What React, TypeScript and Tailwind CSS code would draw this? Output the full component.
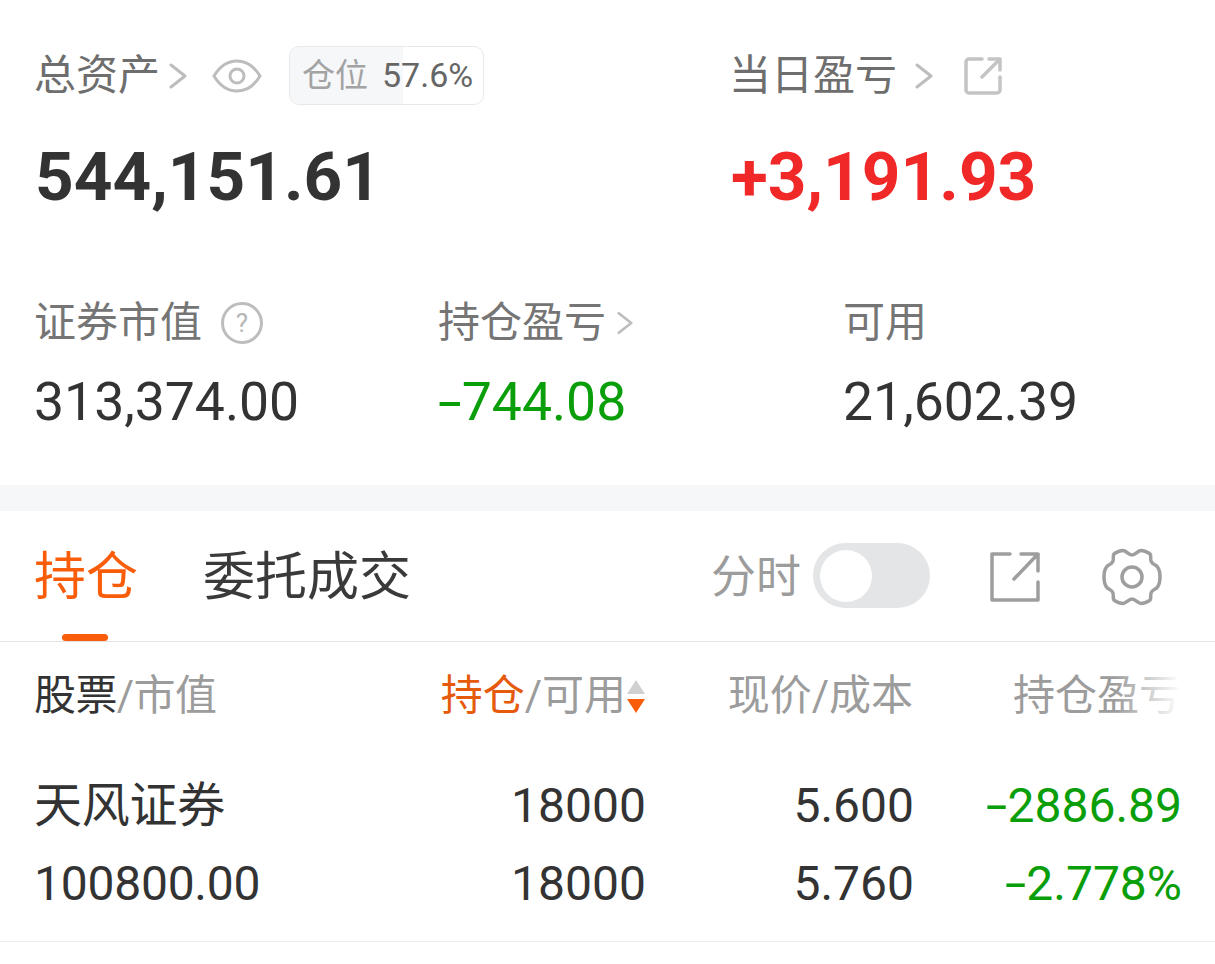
import React from "react";

const FONT = "font-['Roboto','Noto_Sans_CJK_SC',sans-serif]";

function Chevron({ className }: { className?: string }) {
  return (
    <svg viewBox="0 0 18 26" className={className} fill="none" stroke="#bdbdbd" strokeWidth="3" strokeLinecap="round" strokeLinejoin="round">
      <path d="M2 2l14 11L2 24" />
    </svg>
  );
}

function Eye() {
  return (
    <svg viewBox="0 0 50 34" className="w-[50px] h-[34px]" fill="none" stroke="#bdbdbd" strokeWidth="3">
      <path d="M2 17C8 7 16 2 25 2s17 5 23 15c-6 10-14 15-23 15S8 27 2 17z" />
      <circle cx="25" cy="17" r="7" />
    </svg>
  );
}

function Share({ small }: { small?: boolean }) {
  if (small) {
    return (
      <svg viewBox="0 0 38 38" className="w-[38px] h-[38px]" fill="none" stroke="#c4c4c4" strokeWidth="3.5" strokeLinecap="round" strokeLinejoin="round">
        <path d="M18 2H5a3 3 0 0 0-3 3v28a3 3 0 0 0 3 3h28a3 3 0 0 0 3-3V20" />
        <path d="M18 20L36 2M25 2h11v11" />
      </svg>
    );
  }
  return (
    <svg viewBox="0 0 50 50" className="w-[50px] h-[50px]" fill="none" stroke="#9e9e9e" strokeWidth="3.5" strokeLinejoin="round" strokeLinecap="round">
      <path d="M20 2H2v46h46V30" />
      <path d="M24 27L48 2M31 2h17v17" />
    </svg>
  );
}

function Gear() {
  return (
    <svg viewBox="0 0 60 60" className="w-[60px] h-[60px]" fill="none" stroke="#9e9e9e" strokeWidth="3.5">
      <path d="M30 8C33.5 8 36 3.5 39 3.5C42 3.5 45 5 47.5 6.5C50 8 47.5 12 49.5 15C51 18 54 17.5 55.5 20C57 22 58 26 58 30C58 34 57 38 55.5 40C54 42.5 51 42 49.5 45C47.5 48 50 52 47.5 53.5C45 55 42 56.5 39 56.5C36 56.5 33.5 52 30 52C26.5 52 24 56.5 21 56.5C18 56.5 15 55 12.5 53.5C10 52 12.5 48 10.5 45C9 42 6 42.5 4.5 40C3 38 2 34 2 30C2 26 3 22 4.5 20C6 17.5 9 18 10.5 15C12.5 12 10 8 12.5 6.5C15 5 18 3.5 21 3.5C24 3.5 26.5 8 30 8Z" />
      <circle cx="30" cy="30" r="10" />
    </svg>
  );
}

// the reference's minus is much wider than Roboto's hyphen
function Minus() {
  return <span className="inline-block origin-right scale-x-[1.6]">-</span>;
}

function Row({ a, b, c, d }: { a: string; b: string; c: string; d: string }) {
  return (
    <div className="flex h-[78px] items-center text-[48px] text-[#333333]">
      <div className="w-[407px] tracking-[-0.25px]">{a}</div>
      <div className="w-[205px] text-right">{b}</div>
      <div className="w-[268px] text-right">{c}</div>
      <div className="w-[268px] text-right text-[#0a9e0a]"><Minus />{d}</div>
    </div>
  );
}

export default function App() {
  return (
    <div className={`w-[1215px] h-[964px] bg-white overflow-hidden ${FONT}`}>
      {/* summary */}
      <section className="h-[485px] pl-[34px] pt-[46px]">
        <div className="flex">
          <div className="w-[695px]">
            <div className="flex items-center h-[59px]">
              <span className="text-[42px] leading-none text-[#6e6e6e]">总资产</span>
              <Chevron className="w-[18px] h-[26px] ml-[9px]" />
              <span className="ml-[25px]"><Eye /></span>
              <div className="relative ml-[27px] flex h-[59px] w-[195px] items-center overflow-hidden rounded-[10px] border border-[#e8e8ea] pl-[12px]">
                <div className="absolute inset-y-0 left-0 w-[113px] bg-[#f6f7f9]" />
                <span className="relative text-[33px] text-[#a3a3a3]">仓位</span>
                <span className="relative ml-[14px] text-[34px] text-[#666666]">57.6%</span>
              </div>
            </div>
            <div className="mt-[32px] ml-px text-[67.5px] leading-[80px] font-bold text-[#333333]">544,151.61</div>
          </div>
          <div>
            <div className="flex items-center h-[59px]">
              <span className="text-[42px] leading-none text-[#6e6e6e]">当日盈亏</span>
              <Chevron className="w-[18px] h-[26px] ml-[18px]" />
              <span className="ml-[31px]"><Share small /></span>
            </div>
            <div className="mt-[32px] ml-[2px] text-[67.5px] leading-[80px] font-bold text-[#f12828]">+3,191.93</div>
          </div>
        </div>
        <div className="mt-[76px] flex">
          <div className="w-[404px]">
            <div className="flex items-center h-[60px]">
              <span className="text-[42px] leading-none text-[#757575]">证券市值</span>
              <span className="ml-[19px] flex h-[42px] w-[42px] items-center justify-center rounded-full border-[3px] border-[#bdbdbd] text-[26px] leading-none text-[#b5b5b5]">?</span>
            </div>
            <div className="mt-[16px] text-[53.5px] leading-[66px] text-[#333333]">313,374.00</div>
          </div>
          <div className="w-[405px]">
            <div className="flex items-center h-[60px]">
              <span className="text-[42px] leading-none text-[#757575]">持仓盈亏</span>
              <Chevron className="w-[16px] h-[26px] ml-[11px]" />
            </div>
            <div className="mt-[16px] ml-[9px] text-[53.5px] leading-[66px] text-[#0a9e0a]"><Minus />744.08</div>
          </div>
          <div>
            <div className="flex items-center h-[60px] text-[42px] leading-none text-[#757575]">可用</div>
            <div className="mt-[16px] text-[53.5px] leading-[66px] text-[#333333]">21,602.39</div>
          </div>
        </div>
      </section>

      <div className="h-[26px] bg-[#f6f7f9]" />

      {/* tabs */}
      <div className="relative flex h-[131px] items-start border-b border-[#e3e3e3] pl-[34px] pt-[33px]">
        <span className="text-[52px] leading-[68px] text-[#f95d0a]">持仓</span>
        <span className="ml-[65px] text-[52px] leading-[68px] text-[#3a3a3a]">委托成交</span>
        <div className="absolute bottom-0 left-[62px] h-[7px] w-[46px] rounded-full bg-[#f95d0a]" />
        <div className="ml-auto -mt-[5px] flex items-center pr-[53px]">
          <span className="mt-[5px] text-[45px] leading-[68px] text-[#9c9c9c]">分时</span>
          <div className="ml-[12px] flex h-[65px] w-[117px] items-center rounded-full bg-[#e4e5e7] pl-[7px]">
            <div className="h-[52px] w-[52px] rounded-full bg-white" />
          </div>
          <span className="ml-[60px] mt-[2px]"><Share /></span>
          <span className="ml-[62px] mt-[2px]"><Gear /></span>
        </div>
      </div>

      {/* table */}
      <div className="pl-[34px]">
        <div className="relative flex h-[125px] pt-[24px] text-[42px] leading-[60px] text-[#9c9c9c]">
          <div className="w-[406px] tracking-[-0.6px]"><span className="text-[#333333]">股票</span>/市值</div>
          <div className="flex h-[60px] w-[205px] items-center justify-end">
            <span className="text-[#e65a0c]">持仓</span>/可用
            <span className="ml-[1px] flex flex-col gap-[5px]">
              <svg viewBox="0 0 18 14" className="w-[18px] h-[14px]"><path d="M9 0l9 14H0z" fill="#d0d0d0" /></svg>
              <svg viewBox="0 0 18 14" className="w-[18px] h-[14px]"><path d="M0 0h18L9 14z" fill="#f95d0a" /></svg>
            </span>
          </div>
          <div className="w-[268px] text-right">现价/成本</div>
          <div className="w-[268px] text-right">持仓盈亏</div>
          <div className="absolute right-[34px] top-[24px] h-[60px] w-[66px] bg-gradient-to-r from-transparent to-white" />
        </div>
        <Row a="天风证券" b="18000" c="5.600" d="2886.89" />
        <Row a="100800.00" b="18000" c="5.760" d="2.778%" />
      </div>
      <div className="mt-[18px] border-b border-[#ececec]" />
    </div>
  );
}
